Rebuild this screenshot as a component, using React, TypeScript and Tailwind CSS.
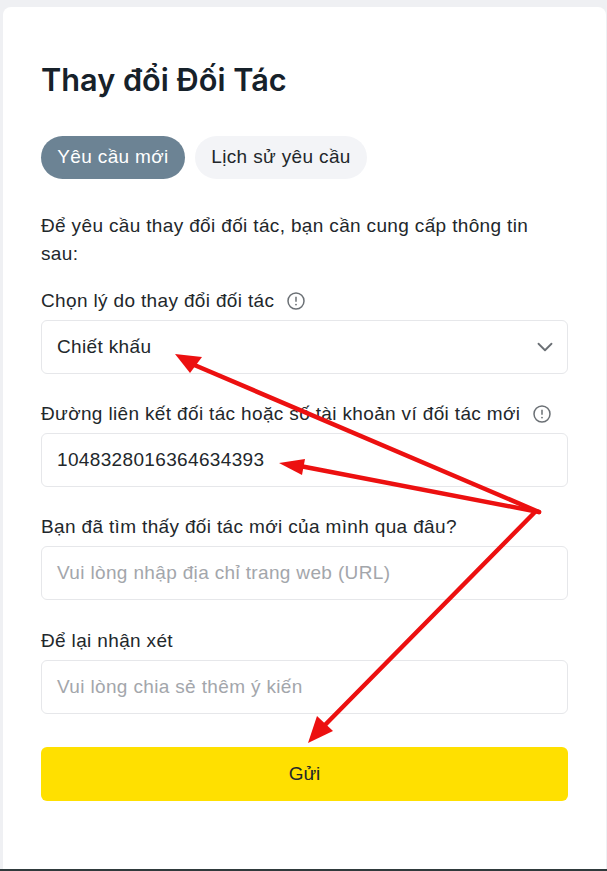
import { ChevronDown } from "lucide-react";

const inputClass =
  "flex h-[54px] w-full items-center rounded-md border border-[#e6e7ea] bg-white px-[15px] text-[19px] tracking-[0.35px]";

function InfoIcon() {
  return (
    <svg width="20" height="20" viewBox="0 0 20 20" fill="none" className="ml-[12px] shrink-0">
      <circle cx="10" cy="10" r="8" stroke="#6b7075" strokeWidth="1.5" />
      <path d="M10 5.8v5" stroke="#6b7075" strokeWidth="1.5" />
      <circle cx="10" cy="13.6" r="0.9" fill="#6b7075" />
    </svg>
  );
}

function Label({ text, info }: { text: string; info?: boolean }) {
  return (
    <div className="flex h-[26px] items-center text-[19px] tracking-[0.35px] text-[#22272b]">
      <span>{text}</span>
      {info && <InfoIcon />}
    </div>
  );
}

export default function App() {
  return (
    <div className="relative h-[871px] w-[607px] overflow-hidden bg-[#eff0f3] pl-[3px] pt-[7px] font-['Liberation_Sans',sans-serif]">
      {/* Card */}
      <div className="h-[862px] w-[603px] rounded-tl-lg rounded-tr-lg bg-white pl-[38px] pr-[38px] pt-[53px]">
        <h1 className="h-[40px] font-['Inter',sans-serif] text-[30.7px] font-semibold leading-[40px] text-[#16212a]">
          Thay đổi Đối Tác
        </h1>

        {/* Tabs */}
        <div className="mt-[36px] flex gap-[10px]">
          <div className="flex h-[43px] w-[144px] items-center justify-center rounded-full bg-[#6c8394] text-[19px] tracking-[0.35px] text-white">
            Yêu cầu mới
          </div>
          <div className="flex h-[43px] w-[172px] items-center justify-center rounded-full bg-[#f3f4f7] text-[19px] tracking-[0.35px] text-[#22272b]">
            Lịch sử yêu cầu
          </div>
        </div>

        <p className="mt-[33px] w-[527px] text-[19px] leading-[28px] tracking-[0.35px] text-[#22272b]">
          Để yêu cầu thay đổi đối tác, bạn cần cung cấp thông tin sau:
        </p>

        <div className="mt-[20px]">
          <Label text="Chọn lý do thay đổi đối tác" info />
          <div className={`${inputClass} mt-[6px] justify-between text-[#22272b]`}>
            <span>Chiết khấu</span>
            <ChevronDown className="-mr-[6px] h-[26px] w-[26px] text-[#6b7075]" strokeWidth={1.7} />
          </div>
        </div>

        <div className="mt-[27px]">
          <Label text="Đường liên kết đối tác hoặc số tài khoản ví đối tác mới" info />
          <div className={`${inputClass} mt-[6px] text-[#22272b]`}>1048328016364634393</div>
        </div>

        <div className="mt-[27px]">
          <Label text="Bạn đã tìm thấy đối tác mới của mình qua đâu?" />
          <div className={`${inputClass} mt-[6px] text-[#a3a6ab]`}>Vui lòng nhập địa chỉ trang web (URL)</div>
        </div>

        <div className="mt-[28px]">
          <Label text="Để lại nhận xét" />
          <div className={`${inputClass} mt-[6px] text-[#a3a6ab]`}>Vui lòng chia sẻ thêm ý kiến</div>
        </div>

        <button className="mt-[33px] flex h-[54px] w-full items-center justify-center rounded-md bg-[#ffe000] text-[19px] text-[#22272b]">
          Gửi
        </button>
      </div>

      {/* Bottom edge */}
      <div className="absolute bottom-0 left-0 h-[2px] w-full bg-[#2f3a3c]" />

      {/* Annotation arrows */}
      <svg width="607" height="871" viewBox="0 0 607 871" className="absolute left-0 top-0">
        <g stroke="#ec1010" strokeWidth="4.5" strokeLinecap="round" fill="none">
          <path d="M539 512 L192 364" />
          <path d="M539 512 L300 466" />
          <path d="M534 513 L322 728" />
        </g>
        <path d="M175 354 L202 357 L190 373 Z" fill="#ec1010" />
        <path d="M279 463 L305 459 L302 475 Z" fill="#ec1010" />
        <path d="M308 743 L317 716 L333 731 Z" fill="#ec1010" />
      </svg>
    </div>
  );
}
